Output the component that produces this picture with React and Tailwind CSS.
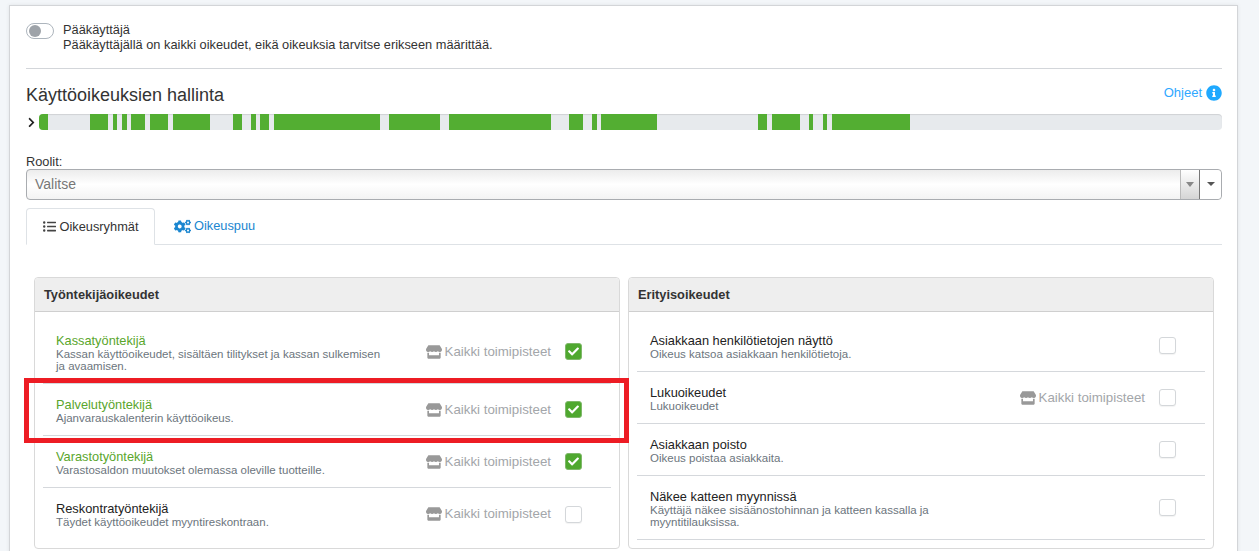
import { FaStore, FaListUl, FaCogs, FaInfoCircle, FaCheck, FaChevronRight } from "react-icons/fa";

// [gap before, width] of each green part of the bar, starts at x=39
const segments = [
  [0, 9], [42, 18], [5, 4], [5, 5], [4, 14], [5, 18], [5, 37], [23, 9], [9, 5], [4, 9], [5, 106],
  [9, 51], [9, 102], [18, 14], [9, 5], [4, 56], [101, 9], [5, 28], [9, 4], [10, 4], [5, 78],
];

const leftRows = [
  { title: "Kassatyöntekijä", text: "Kassan käyttöoikeudet, sisältäen tilitykset ja kassan sulkemisen ja avaamisen.", place: true, checked: true, h: "h-[64px]" },
  { title: "Palvelutyöntekijä", text: "Ajanvarauskalenterin käyttöoikeus.", place: true, checked: true, h: "h-[52px]" },
  { title: "Varastotyöntekijä", text: "Varastosaldon muutokset olemassa oleville tuotteille.", place: true, checked: true, h: "h-[52px]" },
  { title: "Reskontratyöntekijä", text: "Täydet käyttöoikeudet myyntireskontraan.", place: true, checked: false, h: "h-[52px]" },
];

const rightRows = [
  { title: "Asiakkaan henkilötietojen näyttö", text: "Oikeus katsoa asiakkaan henkilötietoja.", h: "h-[52px]" },
  { title: "Lukuoikeudet", text: "Lukuoikeudet", place: true, h: "h-[52px]" },
  { title: "Asiakkaan poisto", text: "Oikeus poistaa asiakkaita.", h: "h-[52px]" },
  { title: "Näkee katteen myynnissä", text: "Käyttäjä näkee sisäänostohinnan ja katteen kassalla ja myyntitilauksissa.", h: "h-[64px]" },
];

function Row({ row, last }) {
  return (
    <div className={`flex items-center pl-[13px] pr-[29px] ${row.h} ${last ? "" : "border-b border-[#d5d8dc]"}`}>
      <div className="w-[330px] shrink-0 pt-[2px]">
        <div className={`text-[12.8px] leading-[14px] ${row.checked ? "text-[#5aa62c]" : "text-[#222]"}`}>{row.title}</div>
        <div className="text-[11.5px] leading-[12px] text-[#6c757d]">{row.text}</div>
      </div>
      <div className="ml-auto flex items-center">
        {row.place && (
          <div className="flex items-center text-[13.3px] text-[#a3a6aa]">
            <FaStore className="text-[16px] text-[#999] mr-[3px]" />
            <span>Kaikki toimipisteet</span>
          </div>
        )}
        {row.checked ? (
          <div className="ml-[14px] w-[17px] h-[17px] rounded-[3px] bg-[#4fa82f] border border-[#7fb86a] flex items-center justify-center">
            <FaCheck className="text-white text-[11px]" />
          </div>
        ) : (
          <div className="ml-[14px] w-[17px] h-[17px] rounded-[3px] bg-white border border-[#d4d7da] shadow-[0_1px_1px_rgba(0,0,0,0.05)]" />
        )}
      </div>
    </div>
  );
}

function Panel({ title, rows, className }) {
  return (
    <section className={`border border-[#d9d9d9] rounded-[4px] ${className}`}>
      <div className="h-[34px] bg-[#eeeeee] border-b border-[#cfcfcf] rounded-t-[4px] flex items-center px-[9px] text-[12.8px] font-bold text-[#333]">
        {title}
      </div>
      <div className="px-[8px] pt-[8px] pb-[8px]">
        {rows.map((row, i) => (
          <Row key={`row/${i}`} row={row} last={i === rows.length - 1 && rows[0].checked} />
        ))}
      </div>
    </section>
  );
}

export default function App() {
  return (
    <div className="h-[551px] overflow-hidden bg-[#f3f6f9] pl-[9px] pr-[21px] pt-[5px] font-['Liberation_Sans',sans-serif] text-[#333]">
      <main className="bg-white border border-[#d3d5d8] shadow-[0_0_4px_rgba(0,0,0,0.08)] h-[600px] pl-[16px] pr-[15px] pt-[17px]">
        <div className="flex items-start">
          <div className="w-[28px] h-[16px] rounded-full border border-[#adb5bd] bg-white flex items-center pl-[2px]">
            <div className="w-[12px] h-[12px] rounded-full bg-[#9ea3a9]" />
          </div>
          <div className="ml-[9px] -mt-[1px] text-[12.8px] leading-[15px]">
            <div>Pääkäyttäjä</div>
            <div>Pääkäyttäjällä on kaikki oikeudet, eikä oikeuksia tarvitse erikseen määrittää.</div>
          </div>
        </div>
        <hr className="mt-[16px] border-t border-[#d3d6da]" />
        <div className="mt-[15px] flex items-center justify-between h-[22px]">
          <h2 className="text-[18px] leading-[22px]">Käyttöoikeuksien hallinta</h2>
          <a className="flex items-center text-[13px] text-[#2fa8ff] -mt-[4px]">
            Ohjeet
            <FaInfoCircle className="ml-[4px] text-[16px] text-[#1fa9ff]" />
          </a>
        </div>
        <div className="mt-[8px] flex items-center">
          <FaChevronRight className="w-[13px] text-[11px] text-[#222] -ml-[1px] mr-[1px]" />
          <div className="flex-1 h-[16px] rounded-[4px] bg-[#e7eaed] shadow-[inset_0_1px_1px_rgba(0,0,0,0.1)] flex overflow-hidden">
            {segments.map(([gap, width], i) => (
              <div key={`seg/${i}`} className="h-full bg-[#53ae32]" style={{ marginLeft: gap, width }} />
            ))}
          </div>
        </div>
        <div className="mt-[24px] text-[12.8px] leading-[15px]">Roolit:</div>
        <div className="flex h-[31px] border border-[#a9acb0] rounded-[4px] bg-gradient-to-b from-[#ececec] via-white to-[#f3f3f3]">
          <div className="flex-1 flex items-center pl-[8px] text-[14px] text-[#777]">Valitse</div>
          <div className="w-[19px] border-l border-[#bbb] bg-gradient-to-b from-white to-[#d5d5d5] flex items-center justify-center">
            <div className="w-0 h-0 border-x-[4px] border-x-transparent border-t-[5px] border-t-[#888]" />
          </div>
          <div className="w-[22px] bg-white border-l border-[#777] rounded-r-[4px] flex items-center justify-center">
            <div className="w-0 h-0 border-x-[4px] border-x-transparent border-t-[4px] border-t-[#555] -mt-[2px]" />
          </div>
        </div>
        <div className="mt-[8px] flex h-[37px] border-b border-[#dee2e6] text-[12.8px]">
          <div className="h-[37px] w-[129px] border border-[#dee2e6] border-b-white rounded-t-[4px] bg-white flex items-center justify-center">
            <FaListUl className="text-[13px] text-[#444] mr-[4px]" />
            <span>Oikeusryhmät</span>
          </div>
          <div className="ml-[19px] flex items-center text-[#1a86d0]">
            <FaCogs className="text-[17px] mr-[3px]" />
            <span>Oikeuspuu</span>
          </div>
        </div>
        <div className="mt-[32px] flex pl-[8px] gap-[8px]">
          <Panel title="Työntekijäoikeudet" rows={leftRows} className="w-[586px]" />
          <Panel title="Erityisoikeudet" rows={rightRows} className="w-[586px]" />
        </div>
      </main>
      {/* highlight drawn over the screenshot */}
      <div className="absolute left-[24px] top-[378px] w-[605px] h-[65px] border-[5px] border-[#ed1c24] pointer-events-none" />
    </div>
  );
}
